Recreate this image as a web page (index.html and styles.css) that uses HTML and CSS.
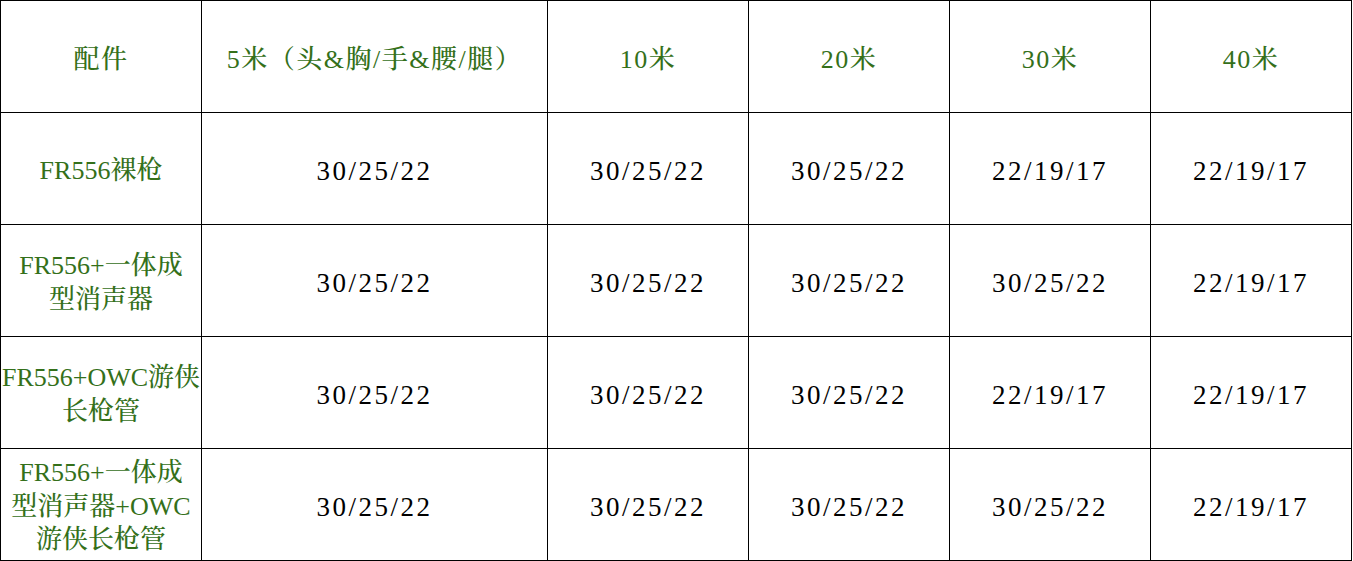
FILE: index.html
```html
<!DOCTYPE html>
<html lang="zh-CN">
<head>
<meta charset="utf-8">
<title>配件伤害表</title>
<link rel="stylesheet" href="styles.css">
</head>
<body>
<div class="table">
  <div class="cell head">配件</div>
  <div class="cell head">5米（头&amp;胸/手&amp;腰/腿）</div>
  <div class="cell head">10米</div>
  <div class="cell head">20米</div>
  <div class="cell head">30米</div>
  <div class="cell head">40米</div>

  <div class="cell label">FR556裸枪</div>
  <div class="cell data">30/25/22</div>
  <div class="cell data">30/25/22</div>
  <div class="cell data">30/25/22</div>
  <div class="cell data">22/19/17</div>
  <div class="cell data">22/19/17</div>

  <div class="cell label">FR556+一体成<br>型消声器</div>
  <div class="cell data">30/25/22</div>
  <div class="cell data">30/25/22</div>
  <div class="cell data">30/25/22</div>
  <div class="cell data">30/25/22</div>
  <div class="cell data">22/19/17</div>

  <div class="cell label">FR556+OWC游侠<br>长枪管</div>
  <div class="cell data">30/25/22</div>
  <div class="cell data">30/25/22</div>
  <div class="cell data">30/25/22</div>
  <div class="cell data">22/19/17</div>
  <div class="cell data">22/19/17</div>

  <div class="cell label">FR556+一体成<br>型消声器+OWC<br>游侠长枪管</div>
  <div class="cell data">30/25/22</div>
  <div class="cell data">30/25/22</div>
  <div class="cell data">30/25/22</div>
  <div class="cell data">30/25/22</div>
  <div class="cell data">22/19/17</div>
</div>
</body>
</html>
```

FILE: styles.css
```css
html, body {
  margin: 0;
  padding: 0;
  background: #ffffff;
}

.table {
  display: grid;
  grid-template-columns: 200px 345px 200px 200px 200px 200px;
  grid-auto-rows: 111px;
  gap: 1px;
  padding: 1px;
  width: max-content;
  background: #000000;
}

.cell {
  background: #ffffff;
  display: flex;
  align-items: center;
  justify-content: center;
  text-align: center;
  box-sizing: border-box;
  font-family: "Liberation Serif", "Noto Serif CJK SC", "Noto Sans CJK SC", serif;
}

.head {
  color: #34701a;
  font-size: 26px;
  font-weight: 500;
  letter-spacing: 1.5px;
  white-space: nowrap;
}

.label {
  color: #34701a;
  font-size: 26px;
  line-height: 33.5px;
  font-weight: 500;
  white-space: nowrap;
  padding-top: 4px;
}

.data {
  color: #000000;
  font-size: 27px;
  letter-spacing: 2.5px;
  padding-top: 6px;
}
```
